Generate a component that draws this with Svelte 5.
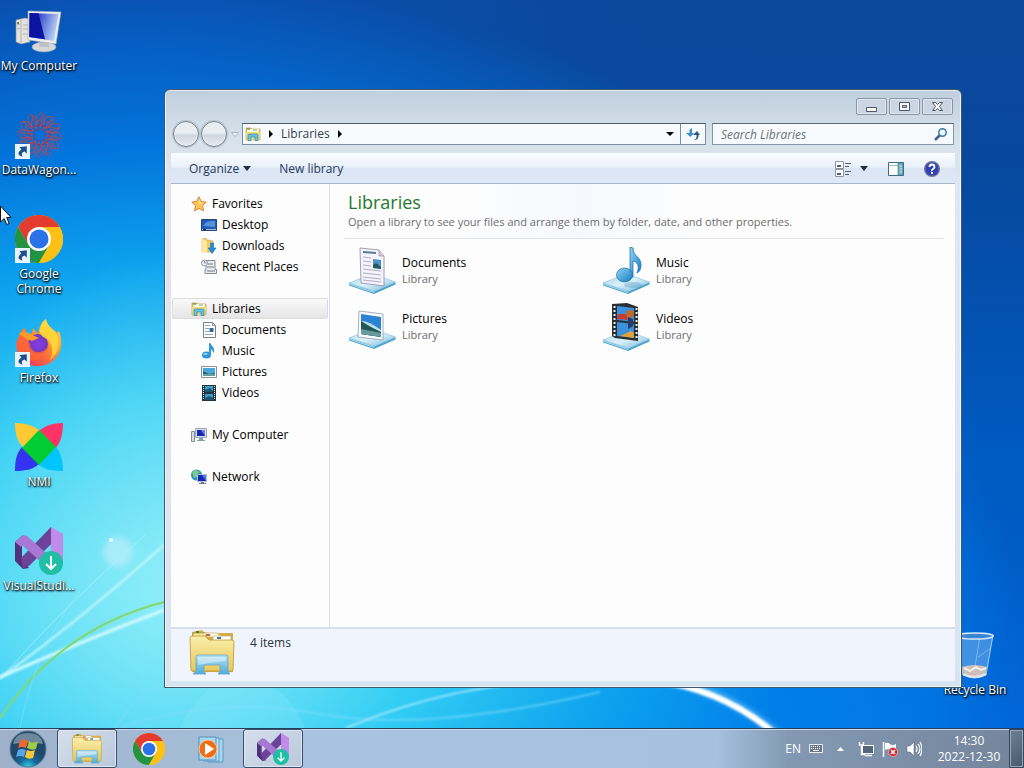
<script lang="ts">
  interface Item {
    label: string;
    icon: string;
    shortcut?: boolean;
  }

  const shortcuts: Item[] = [
    { label: "My Computer", icon: "computer" },
    { label: "DataWagon...", icon: "wagon", shortcut: true },
    { label: "Google Chrome", icon: "chrome", shortcut: true },
    { label: "Firefox", icon: "firefox", shortcut: true },
    { label: "NMI", icon: "nmi" },
    { label: "VisualStudi...", icon: "studio" },
  ];

  const tree: { root: Item; children: Item[] }[] = [
    {
      root: { label: "Favorites", icon: "star" },
      children: [
        { label: "Desktop", icon: "screen" },
        { label: "Downloads", icon: "download" },
        { label: "Recent Places", icon: "recent" },
      ],
    },
    {
      root: { label: "Libraries", icon: "folder" },
      children: [
        { label: "Documents", icon: "doc" },
        { label: "Music", icon: "note" },
        { label: "Pictures", icon: "photo" },
        { label: "Videos", icon: "film" },
      ],
    },
    { root: { label: "My Computer", icon: "pc" }, children: [] },
    { root: { label: "Network", icon: "network" }, children: [] },
  ];

  const libraries: Item[] = [
    { label: "Documents", icon: "lib-doc" },
    { label: "Music", icon: "lib-music" },
    { label: "Pictures", icon: "lib-pictures" },
    { label: "Videos", icon: "lib-video" },
  ];

  const pinned = [
    { label: "Windows Explorer", icon: "explorer", open: true },
    { label: "Google Chrome", icon: "chrome", open: false },
    { label: "Media Player", icon: "media", open: false },
    { label: "Visual Studio Installer", icon: "studio", open: true },
  ];

  const spokes = Array.from({ length: 12 }, (_, i) => i * 30);
  const holes = [0, 1, 2, 3, 4, 5, 6, 7];

  let selected = $state("Libraries");
  let query = $state("");
</script>

{#snippet base()}
  <path d="M1 37 26 45.500 47.500 36v2.500L26 48 1 39.500Z" fill="#4fa3cf" />
  <path d="M1 37 24 28 47.500 36 26 45Z" fill="url(#glass)" stroke="#8fc3dc" stroke-width=".7" />
  <path d="M1 38 26 46.500" stroke="#b9ecf8" stroke-width=".8" />
{/snippet}

{#snippet icon(name: string)}
  {#if name === "computer"}
    <svg viewBox="0 0 48 48" aria-hidden="true">
      <path d="m1 13 9-2 5 1v23L6 37l-5-2Z" fill="#e4e2dc" stroke="#8e8f93" stroke-width=".6" />
      <path d="M6 13v23M2 18l3-1M2 22l3-1M8 18h5M8 22h5M8 27h5" stroke="#a9a8a3" stroke-width=".8" />
      <circle cx="3" cy="16" r="1" fill="#4a5a35" />
      <ellipse cx="29" cy="40" rx="12" ry="5" fill="#d7d8da" stroke="#a2a5aa" stroke-width=".6" />
      <path d="m25 33 9 1v6H24Z" fill="#bfc1c4" />
      <path d="m13 4 33 1-5 32-28-4Z" fill="#eeeef0" stroke="#9fa7b4" stroke-width=".6" />
      <path d="m14.500 6 29 1-4.500 27-25-4Z" fill="url(#pc-screen)" />
      <path d="m14.500 6 9 .3 6.500 26-15.500-2.300Z" fill="#0d14a2" />
    </svg>
  {:else if name === "wagon"}
    <svg viewBox="0 0 48 48" aria-hidden="true">
      <g fill="none" stroke="#a8495f" stroke-width="1">
        {#each spokes as angle}
          <path d="M25 16q8-6 3-13m-3 13q-9-9 2-15m-2 14q6-5 11-5m-11 8 3-16" transform="rotate({angle} 24.500 24)" />
        {/each}
        <circle cx="24.500" cy="24" r="6" stroke="#9b3157" stroke-dasharray="2 1" />
        <circle cx="24.500" cy="24" r="10" stroke="#8d2c59" stroke-dasharray="3 2" />
      </g>
    </svg>
  {:else if name === "chrome"}
    <svg viewBox="0 0 48 48" aria-hidden="true">
      <circle cx="24" cy="24" r="24" fill="#fbc116" />
      <path d="M3.200 12A24 24 0 0 1 44.800 12H24L13.600 30Z" fill="#e33b2e" />
      <path d="M3.200 12A24 24 0 0 0 24 48l10.400-18L13.600 30Z" fill="#229342" />
      <path d="M24 12h20.800A24 24 0 0 1 24 48l10.400-18Z" fill="#fbc116" />
      <circle cx="24" cy="24" r="12" fill="#fff" />
      <circle cx="24" cy="24" r="9.500" fill="#2b72e8" />
    </svg>
  {:else if name === "firefox"}
    <svg viewBox="0 0 48 48" aria-hidden="true">
      <path d="M7 11c3-2 3-2 3-2l2 7 5-2 1-5 5 6C24 7 28 2 31 0c1 8 8 10 11 14l2-2c4 11 3 22-6 30-9 7-23 7-31-1C-1 32 1 20 7 11Z" fill="url(#fox)" />
      <circle cx="23" cy="25" r="10" fill="url(#fox-globe)" />
      <path d="M1 24c2-5 5-8 10-8-2 4 0 7 4 8-1 9 11 13 18 4-3 14-17 17-26 10-4-4-6-8-6-14Z" fill="#ff6634" opacity=".8" />
      <path d="M25 12C25 6 28 2 31 0c1 8 8 10 11 16 4 9 1 19-7 25 4-7 2-16-2-20-3-3-8-3-8-9Z" fill="#ffdb3c" opacity=".85" />
      <path d="M4 15c4-3 7-2 11 0l9 4-7 3-5-2Z" fill="#ff9c27" />
    </svg>
  {:else if name === "nmi"}
    <svg viewBox="0 0 48 48" aria-hidden="true">
      <path d="M0 0c13 0 20 4 25 8L8 24C3 18 0 13 0 0Z" fill="#ffc933" />
      <path d="M48 0c-13 0-19 4-24 8l17 17c4-6 7-12 7-25Z" fill="#ff3366" />
      <path d="M0 48c0-12 2-18 7-24l17 17C18 46 12 48 0 48Z" fill="#3333f2" />
      <path d="M48 48c0-12-3-19-7-24L23 41c6 5 12 7 25 7Z" fill="#00c4fc" />
      <path d="m24 7 17 17-17 18L7 25Z" fill="#00cc33" />
    </svg>
  {:else if name === "studio"}
    <svg viewBox="0 0 48 48" aria-hidden="true">
      <path d="M8 41 36 0v17L14 39Z" fill="#6d439a" />
      <path d="M0 15 8 8v8l-1 2v15l7 8-6 1-8-8Z" fill="#52307c" />
      <path d="m8 42 28-25V0L6 31Z" fill="#6d439a" />
      <path d="M0 15 8 8l4 1 27 24-4 10L7 18l-1 2Z" fill="#a978d5" />
      <path d="m36 0 12 7v30l-12 6Z" fill="#c18be9" />
      <circle cx="36" cy="36" r="12" fill="#1fbfa6" />
      <path d="M36 29v13m-5-5 5 5 5-5" fill="none" stroke="#fff" stroke-width="2" />
    </svg>
  {:else if name === "bin"}
    <svg viewBox="0 0 48 48" aria-hidden="true">
      <path d="M6 4 12 44q12 6 23 0l7-40Z" fill="#7eb6ee" fill-opacity=".5" stroke="#a9cdf0" />
      <path d="m11 36 2 8q10 4 21 0l2-8q-13-4-25 0Z" fill="#cdbfb8" />
      <path d="m13 37 6 3 6-4 5 3 5-2" fill="none" stroke="#f4eeea" stroke-width="2" />
      <path d="m12 43q11 6 23 0" fill="none" stroke="#e4e8ec" stroke-width="2" />
      <path d="m29 5-5 31M40 17l-13 9" stroke="#b9d7f4" stroke-opacity=".5" />
      <ellipse cx="24" cy="5" rx="18" ry="3" fill="#3a86d2" stroke="#d9e9f5" stroke-width="1.500" />
    </svg>
  {:else if name === "explorer"}
    <svg viewBox="0 0 48 48" aria-hidden="true">
      <path d="M4 3 14 1l3 3h28v39H4Z" fill="#d9ad47" />
      <path d="M5 4h14v8H5Z" fill="#f7eba0" stroke="#9c8134" stroke-width=".7" />
      <path d="M15 4h14l5 4H19Z" fill="#fffdf0" stroke="#bb9b4b" stroke-width=".6" />
      <path d="M25 7h18v6H25Z" fill="#fff" stroke="#b3a06a" stroke-width=".6" />
      <path d="M2 9q0-2 2-2h13l4 4h23q2 0 2 2l-1 28q0 1-2 1H5q-2 0-2-1Z" fill="url(#manila)" stroke="#bd9438" stroke-width=".8" />
      <path d="M8 3h3" stroke="#3c8a36" stroke-width="2" />
      <path d="M18 6h4" stroke="#d9573a" stroke-width="2" />
      <path d="M29 9h4" stroke="#41718e" stroke-width="2" />
      <path d="M8 28q0-2 2-2h28q2 0 2 2v14l2 3H30l2-3v-6H16v6l2 3H5l3-3Z" fill="url(#stand)" stroke="#6ba5c3" stroke-width=".8" />
      <path d="M10 28h28v4q-13 1-28 4Z" fill="#fff" opacity=".4" />
    </svg>
  {:else if name === "media"}
    <svg viewBox="0 0 32 32" aria-hidden="true">
      <path d="M13 6h15v23H13Z" fill="#aad9ef" stroke="#5a9cc4" />
      <path d="M9 5h15v23H9Z" fill="#bfe5f5" stroke="#5a9cc4" />
      <path d="M4 4h17v23H4Z" fill="#a9d7ed" stroke="#568fb9" />
      <circle cx="13" cy="16" r="9" fill="#ef6d16" stroke="#f6c7a0" />
      <path d="m10 10 9 6-9 6Z" fill="#fff" />
    </svg>
  {:else if name === "lib-doc"}
    <svg viewBox="0 1 48 48" aria-hidden="true">
      {@render base()}
      <path d="m12 2 19 2 5 6v30l-23-3Z" fill="#f5f3fc" stroke="#8a88a5" stroke-width=".8" />
      <path d="M31 4v6h5" fill="#d7c7e2" stroke="#9a90b0" stroke-width=".7" />
      <path d="m15 6 13 1" stroke="#587e92" stroke-width="2" />
      <path d="m15 11 8 1m-8 3 8 1m-8 3 8 1m-8 3 18 2m-18 2 18 2m-18 2 18 2m-18 1 18 2" stroke="#a7a6bd" stroke-width=".9" />
      <path d="m25 13 8 1v9l-8-1Z" fill="#4d93c5" />
      <path d="m25 19 3-2 5 4v2l-8-1Z" fill="#28575c" />
    </svg>
  {:else if name === "lib-music"}
    <svg viewBox="0 1 48 48" aria-hidden="true">
      {@render base()}
      <ellipse cx="31" cy="39" rx="9" ry="3" fill="#3b8abb" opacity=".3" />
      <path d="m28 1 3 1c0 9 8 8 8 17 0 5-2 7-4 8 3-8 0-11-4-12v16h-3Z" fill="url(#note)" stroke="#2776ad" stroke-width=".8" />
      <ellipse cx="22.500" cy="29" rx="8" ry="7" fill="url(#note)" stroke="#176ca9" stroke-width=".7" />
    </svg>
  {:else if name === "lib-pictures"}
    <svg viewBox="0 2 48 48" aria-hidden="true">
      {@render base()}
      <path d="m11 10 24 3v26l-25-3Z" fill="#fbfcfd" stroke="#8d9cae" stroke-width=".8" />
      <path d="m13 13 20 3v20l-20-3Z" fill="#2b83d4" />
      <path d="M13 20q8 0 20 9v3l-20-3Z" fill="#bde1e3" />
      <path d="m13 20 10 6 10 5v5l-20-3Z" fill="#205858" />
      <path d="m13 28 20 4v4l-20-3Z" fill="#68999d" />
    </svg>
  {:else if name === "lib-video"}
    <svg viewBox="0 0 48 49" aria-hidden="true">
      {@render base()}
      <path d="m10 1 15-1 11 4v34l-23-3-3-2Z" fill="#292e32" />
      <path d="m15 3 17 2v14l-17-2ZM15 19l17 2v14l-17-2Z" fill="#3b91db" />
      <path d="M16 11h8l2 6-11-1Z" fill="#c33c38" />
      <circle cx="28" cy="11" r="4" fill="#bd6a2b" />
      <path d="m26 14 5 2v7l-5 3Z" fill="#263b69" />
      <path d="m18 33 11-5 3 2v5Z" fill="#dfa33c" />
      {#each holes as hole}
        <path d="M11.500 {4 + hole * 4}h2M33.500 {6 + hole * 4}h2" stroke="#e7efef" stroke-width="2" />
      {/each}
    </svg>
  {:else if name === "star"}
    <svg viewBox="0 0 16 16" aria-hidden="true">
      <path d="m8 .8 2.200 4.700 5 .6-3.700 3.600 1 5.200L8 12.300l-4.500 2.600 1-5.200L.8 6.100l5-.6Z" fill="#ffc45a" stroke="#d9842d" />
      <path d="m8 3 1 3 3 1-4 1Z" fill="#fff1ad" />
    </svg>
  {:else if name === "screen"}
    <svg viewBox="0 0 16 16" aria-hidden="true">
      <path d="M.500 2.500h15v11H.5Z" fill="#2359b9" stroke="#28457a" />
      <path d="M2 9C6 3 10 4 14 4v6Z" fill="#5792d9" />
      <path d="M1 12.500h14" stroke="#9cc2da" />
      <path d="M2 12.500h3" stroke="#102e58" />
    </svg>
  {:else if name === "download"}
    <svg viewBox="0 0 16 16" aria-hidden="true">
      <path d="m1 1 4-1 1 2 6 1v11H1Z" fill="#efcb69" stroke="#d6aa4a" stroke-width=".7" />
      <path d="m1 1 5 2v12l-5-1Z" fill="#ffe79a" />
      <path d="M9.500 5h3v5H15l-4 5.500L7 10h2.500Z" fill="#238ed5" stroke="#1974b4" stroke-width=".6" />
    </svg>
  {:else if name === "recent"}
    <svg viewBox="0 0 16 16" aria-hidden="true">
      <path d="M5 1.500h9v9h1.500v4H4v-4h1Z" fill="#e9ecef" stroke="#868d94" />
      <path d="M7 5h5M6 8h7M6 12h8" stroke="#727b83" />
      <circle cx="3.500" cy="4" r="3" fill="#f5f5f5" stroke="#8d969f" />
      <path d="M3.500 2v2h2" fill="none" stroke="#59616b" stroke-width=".7" />
    </svg>
  {:else if name === "folder"}
    <svg viewBox="0 0 16 16" aria-hidden="true">
      <path d="M1 2h5l1 1h8v11H1Z" fill="#e5bd58" stroke="#b9963f" stroke-width=".6" />
      <path d="M2 3h12v3H2Z" fill="#fffbd5" />
      <path d="M2 3h3" stroke="#64a357" stroke-width="1.500" />
      <path d="M8 4h4" stroke="#78a5ac" />
      <path d="M.800 6h14.400l-.8 8H1.500Z" fill="#f2dc79" />
      <path d="M3 14.500V9q0-1 1-1h8q1 0 1 1v5.500h-3V11H6v3.500Z" fill="#64bfe0" stroke="#398fac" stroke-width=".7" />
    </svg>
  {:else if name === "doc"}
    <svg viewBox="0 0 16 16" aria-hidden="true">
      <path d="M2.500.5h9l3 3v12h-12Z" fill="#fff" stroke="#77818d" />
      <path d="M11.500.5v3h3" fill="none" stroke="#8e98a3" />
      <path d="M4 3.500h5M4 6.500h4M4 9.500h4M4 12.500h8" stroke="#98a2b3" />
      <path d="M8.500 6h4v4h-4Z" fill="#286b9c" />
    </svg>
  {:else if name === "note"}
    <svg viewBox="0 0 16 16" aria-hidden="true">
      <path d="m8 0 2 .5c0 3 4 3 3 8l-1 2c0-4-2-4-2-4v6H8Z" fill="#3099d8" />
      <ellipse cx="5.500" cy="12" rx="4.500" ry="3.500" fill="#2e97dc" />
      <ellipse cx="4.500" cy="11" rx="2" ry="1" fill="#9fdbf6" />
    </svg>
  {:else if name === "photo"}
    <svg viewBox="0 0 16 16" aria-hidden="true">
      <path d="M.500 2.500h15v11H.5Z" fill="#fff" stroke="#8192a0" />
      <path d="M2 4h12v8H2Z" fill="#48a6dc" />
      <path d="m2 7 6 3 6-1v3H2Z" fill="#22676d" />
      <path d="M2 11h12" stroke="#a4d7d5" />
    </svg>
  {:else if name === "film"}
    <svg viewBox="0 0 16 16" aria-hidden="true">
      <path d="M1 0h14v16H1Z" fill="#24343b" />
      <path d="M4 1h8v6H4Zm0 8h8v6H4Z" fill="#3d9ccf" />
      <path d="m4 5 5-2 3 3v1H4Zm0 8 4-2 4 2v2H4Z" fill="#1d5774" />
      <path d="M2.500 1v14M13.500 1v14" stroke="#dfe9eb" stroke-dasharray="1 1" />
    </svg>
  {:else if name === "pc"}
    <svg viewBox="0 0 16 16" aria-hidden="true">
      <path d="M.500 4.500h3v10h-3Z" fill="#d8dcde" stroke="#858f99" />
      <path d="M4.500 1.500h11v9h-11Z" fill="#d8dfeb" stroke="#9ba9bd" />
      <path d="M6 3h8v6H6Z" fill="#1a25b2" />
      <path d="m10 3 4 0v6Z" fill="#6885e8" />
      <path d="M8 11h4v2h2v1H6v-1h2Z" fill="#8f9aa5" />
    </svg>
  {:else if name === "network"}
    <svg viewBox="0 0 16 16" aria-hidden="true">
      <circle cx="5.500" cy="6" r="5.500" fill="#2895c5" />
      <path d="m1 3 4-2 4 2-3 2v3L3 9Z" fill="#81cb86" />
      <path d="M6.500 5.500h9v7h-9Z" fill="#1528b3" stroke="#b5bfd1" />
      <path d="m11 6 4 0v6Z" fill="#5877df" />
      <path d="M10 13h3v1h2v1H8v-1h2Z" fill="#6e7886" />
    </svg>
  {/if}
{/snippet}

<svg class="defs" width="0" height="0" aria-hidden="true">
  <defs>
    <linearGradient id="glass" x2="1" y2="1"><stop stop-color="#a9d8ec" /><stop offset=".5" stop-color="#dcf1f9" /><stop offset="1" stop-color="#6db5da" /></linearGradient>
    <linearGradient id="pc-screen" x2="1" y2=".3"><stop offset=".3" stop-color="#2d43cb" /><stop offset="1" stop-color="#b6cdf6" /></linearGradient>
    <linearGradient id="note" x2="1" y2="1"><stop stop-color="#92d6f6" /><stop offset="1" stop-color="#1278c0" /></linearGradient>
    <linearGradient id="manila" x2="0" y2="1"><stop stop-color="#faeeab" /><stop offset="1" stop-color="#e8ca5c" /></linearGradient>
    <linearGradient id="stand" x2="0" y2="1"><stop stop-color="#b5e3f1" /><stop offset="1" stop-color="#4eabd9" /></linearGradient>
    <linearGradient id="fox" x1="1" x2=".2" y2="1"><stop stop-color="#ffe74a" /><stop offset=".45" stop-color="#ff962d" /><stop offset="1" stop-color="#f52c5e" /></linearGradient>
    <radialGradient id="fox-globe"><stop stop-color="#873bea" /><stop offset="1" stop-color="#6f3bb5" /></radialGradient>
    <radialGradient id="orb" cy="1"><stop stop-color="#37d1e8" /><stop offset=".5" stop-color="#14699c" /><stop offset="1" stop-color="#224869" /></radialGradient>
  </defs>
</svg>

<div class="screen">
  <main class="desktop">
    <svg class="wallpaper" viewBox="0 0 1024 728" preserveAspectRatio="none" aria-hidden="true">
      <defs>
        <filter id="soft"><feGaussianBlur stdDeviation="1" /></filter>
        <filter id="haze" x="-50%" y="-50%" width="200%" height="200%"><feGaussianBlur stdDeviation="3" /></filter>
      </defs>
      <g fill="none">
        <path d="M0 678Q80 620 164 545" stroke="#c9f8ff" stroke-width="2" filter="url(#soft)" />
        <path d="M0 680Q50 620 145 535" stroke="#b8f4ff" stroke-width="1" opacity=".6" />
        <path d="M0 677Q85 640 164 610" stroke="#d0faff" stroke-width="3" filter="url(#soft)" />
        <path d="M0 718C28 677 75 625 164 602" stroke="#84d86b" stroke-width="2" />
        <path d="M20 728Q35 650 80 590" stroke="#9ceaff" opacity=".4" />
        <path d="M115 728Q140 690 165 682M120 728Q215 695 320 714T600 692" stroke="#7ddcff" stroke-width="2" opacity=".6" filter="url(#soft)" />
        <path d="M346 728Q425 695 500 686" stroke="#b4eaff" stroke-width="1.500" filter="url(#soft)" />
        <path d="M655 678Q726 688 782 738" stroke="#a5eaff" stroke-width="6" opacity=".6" filter="url(#haze)" />
        <path d="M650 680Q724 688 780 738" stroke="#fff" stroke-width="6" filter="url(#soft)" />
      </g>
      <circle cx="118" cy="552" r="15" fill="#bceefa" opacity=".7" filter="url(#haze)" />
      <circle cx="111" cy="540" r="2" fill="#e4ffff" />
      <path d="M250 680q40 7 55 48H180q10-27 42-48Z" fill="#a7efff" opacity=".15" />
    </svg>

    <ul class="shortcuts">
      {#each shortcuts as item}
        <li>
          <button class="shortcut">
            <span class="shortcut-icon">
              {@render icon(item.icon)}
              {#if item.shortcut}
                <svg class="link-badge" viewBox="0 0 14 14" aria-hidden="true">
                  <path d="M0 0h14v14H0Z" fill="#e9f3fb" />
                  <path d="m4 3 7-1v7L9 7q-4 1-2 5Q0 10 6 5Z" fill="#1c4f91" />
                </svg>
              {/if}
            </span>
            {item.label}
          </button>
        </li>
      {/each}
    </ul>

    <button class="shortcut recycle">
      <span class="shortcut-icon">{@render icon("bin")}</span>
      Recycle Bin
    </button>

    <section class="window" aria-label="Libraries">
      <header class="titlebar">
        <button aria-label="Minimize">
          <svg viewBox="0 0 29 15" aria-hidden="true"><path d="M9.500 8.500h10v4h-10Z" fill="#f7f9fb" stroke="#4c5967" /></svg>
        </button>
        <button aria-label="Maximize">
          <svg viewBox="0 0 29 15" aria-hidden="true"><path d="M9.500 3.500h10v8h-10Z" fill="#f7f9fb" stroke="#4c5967" /><path d="M12.500 6.500h4v2h-4Z" fill="#bcc9d8" stroke="#4c5967" /></svg>
        </button>
        <button aria-label="Close">
          <svg viewBox="0 0 29 15" aria-hidden="true"><path d="m9.500 3.500h3l2 2 2-2h3l-3 4 3 4h-3l-2-2-2 2h-3l3-4Z" fill="#f7f9fb" stroke="#4c5967" /></svg>
        </button>
      </header>

      <div class="navbar">
        <div class="history">
          <button class="round" aria-label="Back"></button>
          <button class="round" aria-label="Forward"></button>
          <button class="recent-pages" aria-label="Recent pages">
            <svg viewBox="0 0 8 5" aria-hidden="true"><path d="M.5.5h7L4 4.500Z" fill="#f7f9fc" stroke="#a6b6c9" /></svg>
          </button>
        </div>

        <div class="address">
          <span class="small-icon">{@render icon("folder")}</span>
          <svg class="crumb-arrow" viewBox="0 0 4 8" aria-hidden="true"><path d="m0 0 4 4-4 4Z" /></svg>
          <a href="#libraries">Libraries</a>
          <svg class="crumb-arrow" viewBox="0 0 4 8" aria-hidden="true"><path d="m0 0 4 4-4 4Z" /></svg>
          <button class="previous" aria-label="Previous locations">
            <svg viewBox="0 0 8 4" aria-hidden="true"><path d="M0 0h8L4 4Z" /></svg>
          </button>
          <button class="refresh" aria-label="Refresh">
            <svg viewBox="0 0 14 14" aria-hidden="true">
              <path d="M6 1Q3 2 3.500 6H0l4.500 4L8 6H6Z" fill="#3b8fc9" />
              <path d="M8 13q3-1 2.500-5H7l4-4 3 4h-1.500Q13 13 8 13Z" fill="#315983" />
            </svg>
          </button>
        </div>

        <div class="search">
          <input type="search" aria-label="Search Libraries" placeholder="Search Libraries" bind:value={query} />
          <svg viewBox="0 0 14 14" aria-hidden="true">
            <path d="m6 8-5 5" stroke="#42618d" stroke-width="2.500" />
            <circle cx="8.500" cy="5.500" r="3.700" fill="#e6faff" stroke="#3b79ac" stroke-width="1.500" />
          </svg>
        </div>
      </div>

      <div class="toolbar">
        <button>Organize <svg class="caret" viewBox="0 0 8 5" aria-hidden="true"><path d="M0 0h8L4 5Z" /></svg></button>
        <button>New library</button>
        <button class="view" aria-label="Change your view">
          <svg class="view-icon" viewBox="0 0 16 16" aria-hidden="true">
            <path d="M.500.5h8v7h-8Zm0 8h8v7h-8Z" fill="#fff" stroke="#8c96a2" />
            <path d="M2 4h4v2H2Zm0 8h4v2H2ZM10 2h6v1h-6Zm0 3h4v1h-4Zm0 5h6v1h-6Zm0 3h4v1h-4Z" fill="#526171" />
          </svg>
          <svg class="caret" viewBox="0 0 8 5" aria-hidden="true"><path d="M0 0h8L4 5Z" /></svg>
        </button>
        <button aria-label="Show the preview pane">
          <svg class="pane-icon" viewBox="0 0 16 14" aria-hidden="true">
            <path d="M.500.5h15v13H.5Z" fill="#fff" stroke="#3e6b8d" />
            <path d="M1 3.500h9" stroke="#a9bccb" />
            <path d="M10 1h5v12h-5Z" fill="#74b4c4" stroke="#417688" stroke-width=".7" />
            <path d="M12 4h2M12 7h2M12 10h2" stroke="#d4eef2" />
          </svg>
        </button>
        <button aria-label="Get help">
          <svg class="help-icon" viewBox="0 0 16 16" aria-hidden="true">
            <circle cx="8" cy="8" r="7.300" fill="#3340b3" stroke="#6c7698" stroke-width="1.400" />
            <path d="M5.500 6Q5.500 3.500 8 3.500T10.500 6Q10.500 7 9 8T8 10M8 11v2" fill="none" stroke="#fff" stroke-width="1.800" />
          </svg>
        </button>
      </div>

      <div class="panes">
        <nav aria-label="Folders">
          {#each tree as group}
            <ul>
              <li>
                <button class:selected={selected === group.root.label} onclick={() => (selected = group.root.label)}>
                  <span class="small-icon">{@render icon(group.root.icon)}</span>{group.root.label}
                </button>
              </li>
              {#each group.children as child}
                <li>
                  <button class="child" class:selected={selected === child.label} onclick={() => (selected = child.label)}>
                    <span class="small-icon">{@render icon(child.icon)}</span>{child.label}
                  </button>
                </li>
              {/each}
            </ul>
          {/each}
        </nav>

        <div class="content" id="libraries">
          <header>
            <h1>Libraries</h1>
            <p>Open a library to see your files and arrange them by folder, date, and other properties.</p>
          </header>
          <ul class="library-list">
            {#each libraries as library}
              <li>
                <span class="large-icon">{@render icon(library.icon)}</span>
                <div>
                  <h2>{library.label}</h2>
                  <p>Library</p>
                </div>
              </li>
            {/each}
          </ul>
        </div>
      </div>

      <footer class="details">
        <span class="large-icon">{@render icon("explorer")}</span>
        <p>4 items</p>
      </footer>
    </section>

    <svg class="pointer" viewBox="0 0 12 20" aria-hidden="true">
      <path d="M.500 1v16l3.700-3.500L6.700 19.500l2.500-1-2.500-6H11Z" fill="#fff" stroke="#111" />
    </svg>
  </main>

  <footer class="taskbar">
    <button class="start" aria-label="Start">
      <svg viewBox="0 0 38 38" aria-hidden="true">
        <circle cx="19" cy="19" r="18" fill="url(#orb)" stroke="#547793" />
        <path d="M4 14Q6 3 19 3t15 11Q19 11 4 14Z" fill="#fff" opacity=".35" />
        <path d="M11 11q4-3 8 0l-2 7q-4-2-8 0Z" fill="#ef672e" />
        <path d="M20 11q4 3 9 0l-2 8q-4 2-9-1Z" fill="#9ccc43" />
        <path d="M9 20q4-2 8 0l-2 7q-4-2-8 0Z" fill="#55a7e7" />
        <path d="M18 20q4 2 8 0l-2 8q-4 2-8-1Z" fill="#fbc83a" />
      </svg>
    </button>
    {#each pinned as app}
      <button class="task" class:open={app.open} aria-label={app.label}>{@render icon(app.icon)}</button>
    {/each}

    <div class="tray">
      <span class="language">EN</span>
      <svg class="keyboard" viewBox="0 0 14 9" aria-hidden="true">
        <path d="M.500.5h13v8H.5Z" fill="#69788c" stroke="#e8edf2" />
        <path d="M2 2.500h10M2 4.500h10" stroke="#fff" stroke-dasharray="1 1" /><path d="M4 6.500h6" stroke="#fff" />
      </svg>
      <button class="more" aria-label="Show hidden icons">
        <svg viewBox="0 0 7 4" aria-hidden="true"><path d="m0 4 3.500-4L7 4Z" fill="#fff" /></svg>
      </button>
      <svg class="status" viewBox="0 0 16 16" aria-hidden="true">
        <path d="M4.500 4.500h11v8h-11Z" fill="#52677e" stroke="#fff" />
        <path d="M7 14.500h7M1.500 1v3h4V1M3.500 5v8.500H7" fill="none" stroke="#fff" stroke-width="1.400" />
      </svg>
      <svg class="status" viewBox="0 0 16 16" aria-hidden="true">
        <path d="M1.500 1v15" stroke="#fff" stroke-width="1.500" />
        <path d="M3 2q3-1 5 1t6 0v7q-3 1-5-1T3 9Z" fill="#fff" />
        <circle cx="11" cy="11" r="4.500" fill="#d8242b" stroke="#eee" stroke-width=".5" />
        <path d="m9 9 4 4m0-4-4 4" stroke="#fff" stroke-width="1.500" />
      </svg>
      <svg class="status" viewBox="0 0 16 16" aria-hidden="true">
        <path d="M1 5h3l4-4v14l-4-4H1Z" fill="#fff" stroke="#536174" stroke-width=".5" />
        <path d="M10 5q2 3 0 6m2-8q4 5 0 10m2-12q4 7 0 14" fill="none" stroke="#fff" stroke-width="1.200" />
      </svg>
      <time datetime="2022-12-30T14:30"><span>14:30</span><span>2022-12-30</span></time>
      <button class="show-desktop" aria-label="Show desktop"></button>
    </div>
  </footer>
</div>

<style>
  :global(body) {
    margin: 0;
    font: 12px/16px "Open Sans", "Noto Sans", sans-serif;
    color: #000;
  }

  :global(*) {
    box-sizing: border-box;
  }

  button,
  input {
    margin: 0;
    padding: 0;
    border: 0;
    background: none;
    color: inherit;
    font: inherit;
  }

  ul {
    margin: 0;
    padding: 0;
    list-style: none;
  }

  h1,
  h2,
  p {
    margin: 0;
    font-weight: 400;
  }

  svg {
    display: block;
  }

  .defs {
    position: absolute;
  }

  .screen {
    display: flex;
    flex-direction: column;
    height: 100vh;
    overflow: hidden;
  }

  .desktop {
    position: relative;
    flex: 1;
    overflow: hidden;
    background:
      radial-gradient(ellipse 24% 44% at 17% 78%, rgb(176 243 248 / 50%) 0%, transparent 100%),
      radial-gradient(ellipse 82% 84% at 17% 82%, #70e8f8 0%, #32cdf4 32%, #0da2ee 54%, rgb(0 125 230 / 80%) 74%, transparent 100%),
      radial-gradient(ellipse 40% 50% at 64% 100%, #0590ff, transparent),
      radial-gradient(ellipse 50% 60% at 12% 10%, rgb(8 88 200 / 60%), transparent),
      linear-gradient(180deg, #0b489b 0%, #07489d 22%, #0059bf 60%, #0061d2 100%);
  }

  .wallpaper {
    position: absolute;
    inset: 0;
    width: 100%;
    height: 100%;
  }

  .shortcuts {
    position: relative;
    display: grid;
    grid-auto-rows: 104px;
    width: 78px;
  }

  .shortcut {
    display: flex;
    flex-direction: column;
    align-items: center;
    gap: 3px;
    width: 78px;
    padding-top: 7px;
    color: #fff;
    line-height: 15px;
    text-shadow: 0 1px 2px #000, 1px 1px 2px #000;
  }

  .shortcut-icon {
    position: relative;
    width: 48px;
    height: 48px;
  }

  .link-badge {
    position: absolute;
    bottom: 0;
    left: 0;
    width: 15px;
    height: 15px;
  }

  .recycle {
    position: absolute;
    right: 10px;
    bottom: 31px;
  }

  .window {
    position: absolute;
    inset: 89px 62px 40px 164px;
    display: flex;
    flex-direction: column;
    padding: 0 6px 6px;
    border: 1px solid #40566e;
    border-radius: 6px 6px 0 0;
    background: linear-gradient(180deg, #c0cfdd 0, #d8e2eb 50px, #dfe6ef 100px, #dde4f1 80%, #d5e5ee 100%);
    box-shadow: inset 0 0 0 1px rgb(255 255 255 / 60%);
  }

  .titlebar {
    display: flex;
    justify-content: flex-end;
    gap: 2px;
    height: 33px;
    padding: 8px 2px 0 0;
  }

  .titlebar button {
    width: 31px;
    height: 17px;
    border: 1px solid #8796a8;
    border-radius: 2px;
    background: #cbd6e2;
    box-shadow: inset 0 0 0 1px rgb(255 255 255 / 40%);
  }

  .navbar {
    display: flex;
    gap: 6px;
    height: 30px;
    padding: 0 1px 8px 2px;
  }

  .history {
    display: flex;
    align-items: center;
    gap: 2px;
    width: 63px;
  }

  .round {
    flex: none;
    width: 26px;
    height: 26px;
    border: 1px solid #75818f;
    border-radius: 50%;
    background: linear-gradient(#e9eef3 0 45%, #ced7e0 55%, #e7edf2);
    box-shadow: inset 0 0 0 1px #f1f4f7, 0 0 0 1px #b8c4d0;
  }

  .recent-pages {
    flex: none;
    width: 8px;
    margin-left: 2px;
  }

  .address {
    display: flex;
    flex: 1;
    align-items: center;
    gap: 8px;
    height: 22px;
    padding-left: 2px;
    border: 1px solid #7c8da1;
    border-top-color: #4f5a68;
    background: #f7fafd;
    color: #333e4b;
  }

  .address a {
    color: inherit;
    text-decoration: none;
  }

  .small-icon {
    flex: none;
    width: 16px;
    height: 16px;
  }

  .crumb-arrow {
    width: 4px;
    height: 8px;
  }

  .previous {
    width: 16px;
    margin-left: auto;
    padding: 0 4px;
  }

  .refresh {
    display: grid;
    place-items: center;
    align-self: stretch;
    width: 25px;
    margin-left: -6px;
    border-left: 1px solid #7c8da1;
  }

  .refresh svg {
    width: 14px;
  }

  .search {
    display: flex;
    align-items: center;
    width: 242px;
    height: 22px;
    padding: 0 5px 0 8px;
    border: 1px solid #8796a9;
    border-top-color: #5c6877;
    background: #f7fafd;
  }

  .search input {
    flex: 1;
    min-width: 0;
    height: 20px;
    outline: 0;
  }

  .search input::placeholder {
    color: #6d7278;
    font-style: italic;
    opacity: 1;
  }

  .search svg {
    width: 14px;
    height: 14px;
  }

  .toolbar {
    display: flex;
    align-items: center;
    height: 31px;
    gap: 20px;
    padding: 0 15px 0 18px;
    border-top: 1px solid #f9fcff;
    border-bottom: 1px solid #a9b7cb;
    background: linear-gradient(#fafcff, #e9f0fa 45%, #dce5f3 50%, #dfe8f6);
    color: #1e395b;
  }

  .toolbar button {
    display: flex;
    align-items: center;
    gap: 4px;
  }

  .toolbar button + button {
    padding-left: 8px;
  }

  .toolbar .view {
    gap: 9px;
    margin-left: auto;
  }

  .toolbar .view + button,
  .toolbar .view + button + button {
    padding-left: 0;
  }

  .caret {
    width: 8px;
    height: 5px;
    fill: #1e2e44;
  }

  .view-icon,
  .pane-icon,
  .help-icon {
    width: 16px;
  }

  .panes {
    display: flex;
    flex: 1;
    min-height: 0;
    background: #fdfdfd;
  }

  nav {
    display: flex;
    flex-direction: column;
    gap: 21px;
    width: 159px;
    padding: 9px 1px 0;
    border-right: 1px solid #d6e0ee;
    overflow: hidden;
  }

  nav button {
    display: flex;
    align-items: center;
    gap: 5px;
    width: 100%;
    height: 21px;
    padding-left: 18px;
    border: 1px solid transparent;
    border-radius: 2px;
    white-space: nowrap;
  }

  nav .child {
    padding-left: 28px;
  }

  nav .selected {
    border-color: #dcdcdc;
    background: linear-gradient(#fafafa, #e5e5e5);
  }

  .content {
    flex: 1;
    padding: 6px 12px 0 15px;
    background: linear-gradient(90deg, #fdfdfd 20%, #f6f8fd 40%, #fdfdfd 60%) top / 100% 54px no-repeat;
  }

  .content header {
    padding: 0 3px 8px;
    border-bottom: 1px solid #dfe3e8;
  }

  .content h1 {
    color: #1d7a2c;
    font-size: 18px;
    line-height: 24px;
  }

  .content p {
    color: #6d6d6d;
    font-size: 11px;
  }

  .library-list {
    display: grid;
    grid-template-columns: repeat(auto-fill, 254px);
    grid-auto-rows: 56px;
    padding: 4px 3px 0;
  }

  .library-list li {
    display: flex;
    align-items: center;
    gap: 6px;
  }

  .library-list h2 {
    font-size: 12px;
  }

  .large-icon {
    flex: none;
    width: 48px;
    height: 48px;
  }

  .details {
    display: flex;
    gap: 14px;
    height: 54px;
    padding: 0 17px;
    border-top: 2px solid #d5dfec;
    background: #f0f4fc;
    color: #2a3542;
  }

  .details p {
    padding-top: 6px;
  }

  .pointer {
    position: absolute;
    top: 205px;
    left: 0;
    width: 12px;
    height: 20px;
  }

  .taskbar {
    display: flex;
    gap: 2px;
    height: 40px;
    border-top: 1px solid #263f58;
    background: linear-gradient(90deg, #9fb1c9, #a8c2df 30%, #a6c0de 70%, #8399b3 77%, #74859b);
    box-shadow: inset 0 1px #cbd9ea;
  }

  .start {
    display: grid;
    place-items: center;
    width: 55px;
  }

  .start svg {
    width: 38px;
  }

  .task {
    display: grid;
    place-items: center;
    width: 60px;
    border: 1px solid transparent;
    border-radius: 3px;
  }

  .task :global(svg) {
    width: 32px;
    height: 32px;
  }

  .task.open {
    border-color: #38506d;
    background: linear-gradient(135deg, #d5dfeb, #b9c9dc);
    box-shadow: inset 0 0 0 1px #dfe8f2;
  }

  .tray {
    display: flex;
    align-items: center;
    gap: 8px;
    margin-left: auto;
    color: #fff;
  }

  .keyboard {
    width: 14px;
  }

  .more {
    width: 19px;
    padding: 0 6px;
  }

  .status {
    width: 16px;
  }

  time {
    display: grid;
    width: 78px;
    text-align: center;
  }

  .show-desktop {
    align-self: stretch;
    width: 15px;
    margin-left: -7px;
    border: 1px solid #34485f;
    background: linear-gradient(135deg, #6e8095, #47576b);
    box-shadow: inset 0 0 0 1px #96a4b4;
  }
</style>
